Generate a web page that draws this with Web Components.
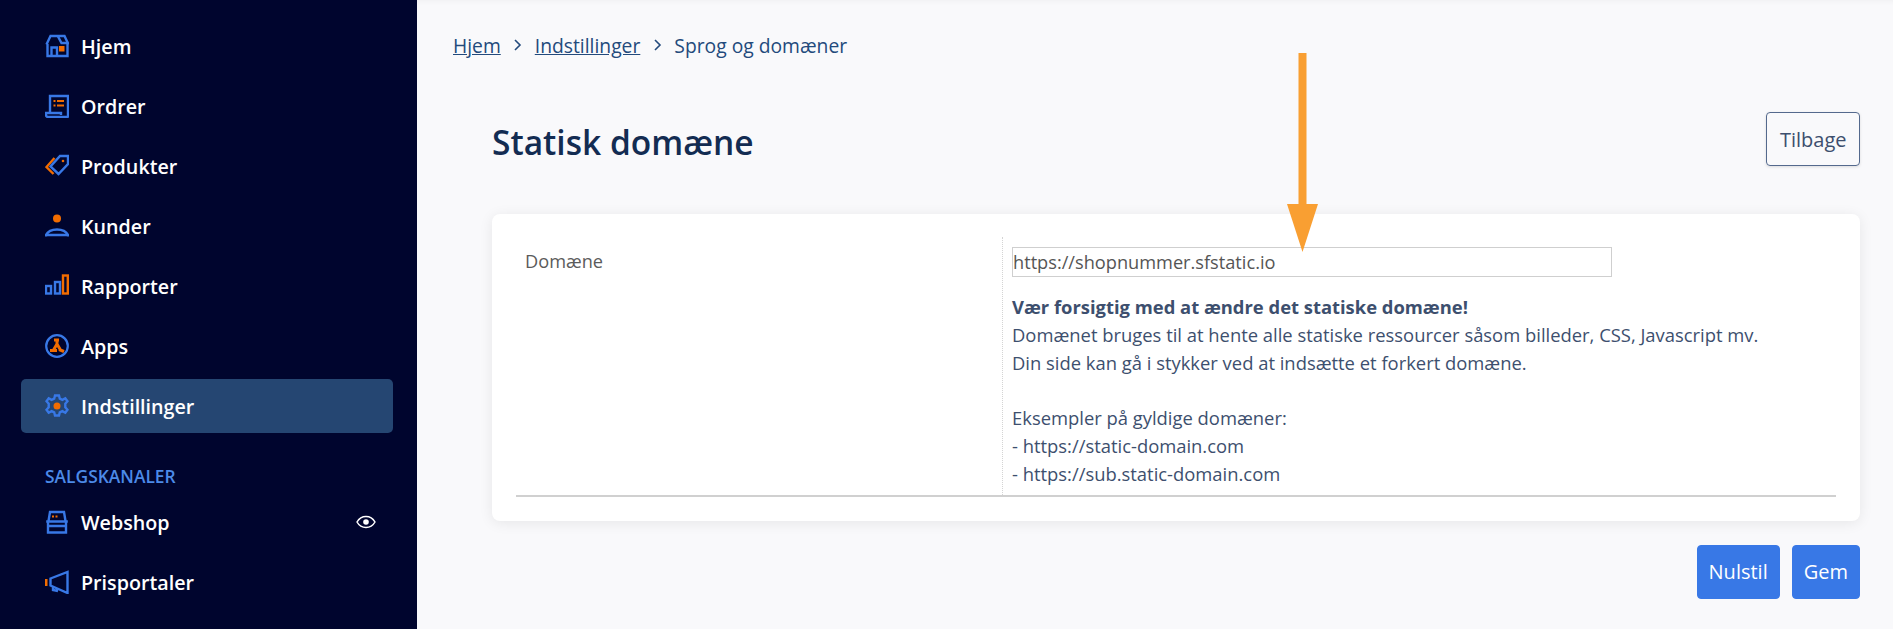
<!DOCTYPE html>
<html lang="da">
<head>
<meta charset="utf-8">
<title>Statisk domæne</title>
<style>
  html, body { margin: 0; height: 100%; overflow: hidden; }
  body { font-family: "Open Sans", "Noto Sans", sans-serif; }
</style>
</head>
<body>
<app-shell>
  <side-nav slot="nav">
    <nav-item icon="home">Hjem</nav-item>
    <nav-item icon="orders">Ordrer</nav-item>
    <nav-item icon="tag">Produkter</nav-item>
    <nav-item icon="person">Kunder</nav-item>
    <nav-item icon="bars">Rapporter</nav-item>
    <nav-item icon="apps">Apps</nav-item>
    <nav-item icon="gear" active>Indstillinger</nav-item>
    <nav-heading>SALGSKANALER</nav-heading>
    <nav-item icon="shop" eye>Webshop</nav-item>
    <nav-item icon="megaphone">Prisportaler</nav-item>
  </side-nav>
  <bread-crumbs>
    <a href="#">Hjem</a>
    <a href="#">Indstillinger</a>
    <span>Sprog og domæner</span>
  </bread-crumbs>
  <page-header title="Statisk domæne">
    <ui-button>Tilbage</ui-button>
  </page-header>
  <settings-card label="Domæne" value="https://shopnummer.sfstatic.io">
    <b>Vær forsigtig med at ændre det statiske domæne!</b><br>
    Domænet bruges til at hente alle statiske ressourcer såsom billeder, CSS, Javascript mv.<br>
    Din side kan gå i stykker ved at indsætte et forkert domæne.<br>
    <br>
    Eksempler på gyldige domæner:<br>
    - https://static-domain.com<br>
    - https://sub.static-domain.com
  </settings-card>
  <form-actions>
    <ui-button primary>Nulstil</ui-button>
    <ui-button primary>Gem</ui-button>
  </form-actions>
  <arrow-overlay></arrow-overlay>
</app-shell>

<script>
const html = String.raw;
const BLUE = "#3878e6";
const ORANGE = "#f26c00";

const ICONS = {
  home: html`
    <path d="M1.500 10.500 5.500 2h14l4 8.500M2.500 10v12h20V10" fill="none" stroke="${BLUE}" stroke-width="2.400"/>
    <path d="M6.500 22v-8.500h5.500V22M13 2.500l3.500 6.500h7" fill="none" stroke="${BLUE}" stroke-width="2.400"/>
    <rect x="14" y="12" width="5.500" height="5.500" fill="${ORANGE}"/>`,
  orders: html`
    <path d="M5 18V2h18v20a1 1 0 0 1-1 1H3a2 2 0 0 1-2-2v-2h15v2" fill="none" stroke="${BLUE}" stroke-width="2.400"/>
    <path d="M8.500 7h2M12 7h7M8.500 11.500h2M12 11.500h7" stroke="${ORANGE}" stroke-width="2.200"/>`,
  tag: html`
    <path d="M9.500 4 1.500 13 8.500 20" fill="none" stroke="${ORANGE}" stroke-width="2.400"/>
    <path d="M15 2h8v8l-9.500 10-8-7.500z" fill="none" stroke="${BLUE}" stroke-width="2.400"/>
    <circle cx="18" cy="7" r="1.300" fill="${ORANGE}"/>`,
  person: html`
    <circle cx="12" cy="4.500" r="4" fill="${ORANGE}"/>
    <path d="M1 22.500v-1.500C3 17 7 15.500 12 15.500s9 1.500 11 5.500v1.500M1 21h22" fill="none" stroke="${BLUE}" stroke-width="2.400"/>`,
  bars: html`
    <rect x="1" y="12" width="5" height="7.500" fill="none" stroke="${BLUE}" stroke-width="2.400"/>
    <rect x="10" y="8" width="5" height="11.500" fill="none" stroke="${BLUE}" stroke-width="2.400"/>
    <rect x="18" y="1.500" width="4.800" height="18" fill="none" stroke="${ORANGE}" stroke-width="2.400"/>`,
  apps: html`
    <circle cx="12" cy="12" r="10.800" fill="none" stroke="${BLUE}" stroke-width="2.200"/>
    <path d="M9 6h5M12 6v4L8.500 16M12 10l3.500 6M5 16.500h7M14 15.500l5 2" fill="none" stroke="${ORANGE}" stroke-width="3"/>`,
  gear: html`
    <path d="M10 1.500h4l.8 3.200 2.600 1.100 2.900-1.600 2.200 3-2.200 2.500v3.600l2.200 2.500-2.200 3-2.900-1.600-2.600 1.100-.8 3.200h-4l-.8-3.200-2.600-1.100-2.900 1.600-2.200-3 2.200-2.500v-3.600L1.500 7.200l2.200-3 2.900 1.600 2.600-1.100z" fill="none" stroke="${BLUE}" stroke-width="2.400"/>
    <circle cx="12" cy="12" r="3.500" fill="${ORANGE}"/>`,
  shop: html`
    <path d="M3.500 11 5 2h14l1.500 9M1.200 11.500h21.600M3 11v11.500h18V11M3 16h18" fill="none" stroke="${BLUE}" stroke-width="2.400"/>
    <path d="M7 6.500h2M10.500 6.500h2" stroke="${ORANGE}" stroke-width="2"/>`,
  megaphone: html`
    <rect x="0" y="9" width="2.500" height="7" fill="${ORANGE}"/>
    <path d="M5.500 8.500 22.500 2v21L5.500 15.500zM8 16.500v3.500l5 1" fill="none" stroke="${BLUE}" stroke-width="2.400"/>`,
};

class AppShell extends HTMLElement {
  constructor() {
    super();
    this.attachShadow({ mode: "open" });
    this.shadowRoot.innerHTML = html`
      <style>
        :host { display: flex; position: relative; height: 629px; overflow: hidden; background: #f9f9fb; }
        .nav { flex: 0 0 417px; }
        main { flex: 1; min-width: 0; padding: 33px 33px 0 36px; box-shadow: inset 0 6px 6px -6px #0000000f; }
      </style>
      <div class="nav"><slot name="nav"></slot></div>
      <main><slot></slot></main>
    `;
  }
}
customElements.define("app-shell", AppShell);

class SideNav extends HTMLElement {
  constructor() {
    super();
    this.attachShadow({ mode: "open" });
    this.shadowRoot.innerHTML = html`
      <style>
        :host { display: block; height: 100%; box-sizing: border-box; padding: 19px 24px 0 21px; background: #00052e; }
      </style>
      <slot></slot>
    `;
  }
}
customElements.define("side-nav", SideNav);

class NavItem extends HTMLElement {
  constructor() {
    super();
    this.attachShadow({ mode: "open" });
    const eye = this.hasAttribute("eye")
      ? html`<svg class="eye" width="20" height="14" viewBox="0 0 20 14"><path d="M1 7c2-3.500 5-5.500 9-5.500S17 3.500 19 7c-2 3.500-5 5.500-9 5.500S3 10.500 1 7z" fill="none" stroke="#fff" stroke-width="1.500"/><circle cx="10" cy="7" r="2.800" fill="#fff"/></svg>`
      : "";
    this.shadowRoot.innerHTML = html`
      <style>
        :host { display: flex; align-items: center; gap: 12px; height: 54px; margin-bottom: 6px; padding: 0 17px 0 24px; border-radius: 5px; box-sizing: border-box; color: #fff; font-size: 19.700px; font-weight: 600; }
        :host([active]) { background: #254672; }
        svg.icon { flex: none; }
        .label { flex: 1; padding-top: 1px; }
      </style>
      <svg class="icon" width="24" height="24" viewBox="0 0 24 24">${ICONS[this.getAttribute("icon")] || ""}</svg>
      <span class="label"><slot></slot></span>
      ${eye}
    `;
  }
}
customElements.define("nav-item", NavItem);

class NavHeading extends HTMLElement {
  constructor() {
    super();
    this.attachShadow({ mode: "open" });
    this.shadowRoot.innerHTML = html`
      <style>
        :host { display: block; padding: 26px 0 0 24px; height: 30px; color: #4c8ae8; font-size: 17.400px; font-weight: 600; line-height: 22px; }
      </style>
      <slot></slot>
    `;
  }
}
customElements.define("nav-heading", NavHeading);

class BreadCrumbs extends HTMLElement {
  constructor() {
    super();
    this.attachShadow({ mode: "open" });
    this.shadowRoot.innerHTML = html`
      <style>
        :host { display: block; height: 26px; }
        #crumbs { display: flex; align-items: center; color: #234a7c; font-size: 19.300px; font-weight: 500; line-height: 26px; }
        svg { margin: 0 12.500px 2px 12.500px; }
        a { color: inherit; }
      </style>
      <div id="crumbs"></div>
    `;
  }
  connectedCallback() {
    const parts = [...this.children].map((el) =>
      el.tagName === "A" ? `<a href="#">${el.textContent}</a>` : `<span>${el.textContent}</span>`
    );
    const sep = html`<svg width="9" height="12" viewBox="0 0 9 12"><path d="M2 1l5 5-5 5" fill="none" stroke="#234a7c" stroke-width="1.600"/></svg>`;
    this.shadowRoot.querySelector("#crumbs").innerHTML = parts.join(sep);
  }
}
customElements.define("bread-crumbs", BreadCrumbs);

class PageHeader extends HTMLElement {
  constructor() {
    super();
    this.attachShadow({ mode: "open" });
    this.shadowRoot.innerHTML = html`
      <style>
        :host { display: flex; justify-content: space-between; align-items: center; margin: 53px 0 48px 39px; height: 54px; }
        h1 { margin: 0; padding-top: 5px; color: #132c52; font-size: 33.500px; font-weight: 600; }
      </style>
      <h1>${this.getAttribute("title")}</h1>
      <slot></slot>
    `;
  }
}
customElements.define("page-header", PageHeader);

class SettingsCard extends HTMLElement {
  constructor() {
    super();
    this.attachShadow({ mode: "open" });
    this.shadowRoot.innerHTML = html`
      <style>
        :host { display: block; margin-left: 39px; padding: 23px 24px 24px 24px; background: #fff; border-radius: 8px; box-shadow: 0 2px 14px #00000014; }
        .row { display: grid; grid-template-columns: 486px 1fr; border-bottom: 2px solid #d0d0d0; }
        .label { padding: 11px 0 0 9px; color: #5b5b5b; font-size: 18.200px; line-height: 26px; }
        .field { padding: 10px 0 0 9px; border-left: 1px dotted #d4d4d4; }
        input { display: block; box-sizing: border-box; width: 600px; height: 30px; margin: 0; padding: 0; border: 1px solid #cfcfcf; background: #fff; color: #555; font: 400 18.200px "Open Sans", sans-serif; outline: none; }
        .help { margin-top: 16px; color: #3d4f6e; font-size: 18.400px; line-height: 27.800px; padding-bottom: 7px; }
      </style>
      <div class="row">
        <div class="label">${this.getAttribute("label")}</div>
        <div class="field">
          <input type="text" value="${this.getAttribute("value")}">
          <div class="help"><slot></slot></div>
        </div>
      </div>
    `;
  }
}
customElements.define("settings-card", SettingsCard);

class FormActions extends HTMLElement {
  constructor() {
    super();
    this.attachShadow({ mode: "open" });
    this.shadowRoot.innerHTML = html`
      <style>
        :host { display: flex; justify-content: flex-end; gap: 12px; margin-top: 24px; }
      </style>
      <slot></slot>
    `;
  }
}
customElements.define("form-actions", FormActions);

class UiButton extends HTMLElement {
  constructor() {
    super();
    this.attachShadow({ mode: "open" });
    this.shadowRoot.innerHTML = html`
      <style>
        :host { display: inline-flex; align-items: center; justify-content: center; box-sizing: border-box; height: 54px; padding: 0 12.500px; border: 1px solid #54698d; border-radius: 4px; color: #3d4f6e; font-size: 20px; box-shadow: 0 1px 3px #0000001f; }
        :host([primary]) { padding: 0 11px; background: #3878e6; border-color: #3878e6; color: #fff; box-shadow: none; }
      </style>
      <slot></slot>
    `;
  }
}
customElements.define("ui-button", UiButton);

// the orange annotation drawn on top of the screenshot
class ArrowOverlay extends HTMLElement {
  constructor() {
    super();
    this.attachShadow({ mode: "open" });
    this.shadowRoot.innerHTML = html`
      <style>
        :host { position: absolute; left: 1287px; top: 53px; width: 31px; height: 200px; }
      </style>
      <svg width="31" height="200" viewBox="0 0 31 200">
        <path d="M11.500 0h8v151H31L15.500 199 0 151h11.500z" fill="#f99f32"/>
      </svg>
    `;
  }
}
customElements.define("arrow-overlay", ArrowOverlay);
</script>
</body>
</html>
